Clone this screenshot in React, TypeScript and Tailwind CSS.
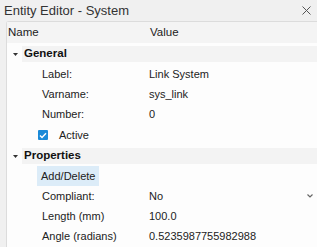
import React from "react";

const font = { fontFamily: '"Liberation Sans", Arial, sans-serif' };

function Row({ label, value, extra }: { label: string; value: string; extra?: React.ReactNode }) {
  return (
    <div className="flex h-[20px] items-center text-[11px] text-[#222]">
      <div className="w-[142px] pl-[35px]">{label}</div>
      <div className="flex-1">{value}</div>
      {extra}
    </div>
  );
}

function Section({ title }: { title: string }) {
  return (
    <div className="flex h-[20px] items-center">
      <div className="flex w-[14px] justify-center pl-[2px]">
        <svg width="5" height="3" viewBox="0 0 5 3"><path d="M0 0H5L2.5 3Z" fill="#333" /></svg>
      </div>
      <div className="ml-[1px] flex h-[16px] flex-1 items-center bg-[#f3f3f3] pl-[2px] text-[11.5px] font-bold text-[#111]">
        {title}
      </div>
    </div>
  );
}

export default function App() {
  return (
    <div className="h-[247px] w-[317px] overflow-hidden bg-[#f0f0f0]" style={font}>
      <div className="flex h-[21px] items-center justify-between pl-[4px] pr-[6px]">
        <span className="text-[13px] text-[#333]">Entity Editor - System</span>
        <svg width="9" height="9" viewBox="0 0 9 9"><path d="M0.5 0.5L8.5 8.5M8.5 0.5L0.5 8.5" stroke="#555" strokeWidth="1" /></svg>
      </div>
      <div className="ml-[6px] h-[226px] rounded-tl-[3px] border-l border-t border-[#dcdcdc] bg-[#fdfdfd]">
        <div className="flex h-[21px] items-center bg-[#f4f4f4] text-[11.5px] text-[#222]">
          <div className="w-[143px] pl-[1px]">Name</div>
          <div>Value</div>
        </div>
        <div className="h-[1px]" />
        <Section title="General" />
        <Row label="Label:" value="Link System" />
        <Row label="Varname:" value="sys_link" />
        <Row label="Number:" value="0" />
        <div className="flex h-[22px] items-center text-[11px] text-[#222]">
          <div className="ml-[31px] flex h-[10px] w-[10px] items-center justify-center rounded-[1px] bg-[#1a8ad8]">
            <svg width="8" height="7" viewBox="0 0 8 7"><path d="M1 3.5L3 5.5L7 1.2" stroke="#fff" strokeWidth="1.4" fill="none" /></svg>
          </div>
          <span className="ml-[11px]">Active</span>
        </div>
        <Section title="Properties" />
        <div className="flex h-[20px] items-center">
          <div className="ml-[30px] flex h-[20px] items-center bg-[#dcecf8] px-[4px] text-[11px] text-[#222]">Add/Delete</div>
        </div>
        <Row
          label="Compliant:"
          value="No"
          extra={
            <svg className="mr-[4px]" width="6" height="4" viewBox="0 0 6 4"><path d="M0.5 0.5L3 3L5.5 0.5" stroke="#666" strokeWidth="1.2" fill="none" /></svg>
          }
        />
        <Row label="Length (mm)" value="100.0" />
        <Row label="Angle (radians)" value="0.5235987755982988" />
      </div>
    </div>
  );
}
